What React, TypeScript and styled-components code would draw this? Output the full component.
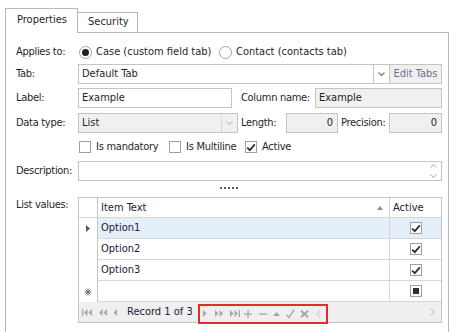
import styled, { createGlobalStyle } from 'styled-components'

const FONT = `"DejaVu Sans Condensed", "Noto Sans", "Liberation Sans", Arial, sans-serif`

const colors = {
  text: '#1f1f1f',
  cellText: '#20203a',
  border: '#b9b9b9',
  inputBorder: '#c4c4c4',
  rowLine: '#d6d6d6',
  disabledBg: '#f0f0f0',
  pagerBg: '#efefef',
  navIcon: '#a6a6a6',
  selected: '#e5effa',
  annotation: '#d9302c',
}

const GlobalStyle = createGlobalStyle`
  body {
    margin: 0;
    background: #fff;
    font-family: ${FONT};
    font-size: 11px;
    line-height: 14px;
    color: ${colors.text};
    overflow: hidden;
  }
`

const Page = styled.div`
  box-sizing: border-box;
  width: 454px;
  height: 332px;
  padding: 8px 0 0 5px;
  overflow: hidden;
`

const TabStrip = styled.div`
  display: flex;
  align-items: flex-end;
  height: 24px;
`

const TabHeader = styled.div<{ $active?: boolean; $w: number }>`
  position: relative;
  z-index: 1;
  box-sizing: border-box;
  width: ${({ $w }) => $w}px;
  height: ${({ $active }) => ($active ? 25 : 20)}px;
  margin-bottom: ${({ $active }) => ($active ? -1 : 0)}px;
  padding: ${({ $active }) => ($active ? '4px 0 0 11px' : '2px 0 0 10px')};
  border: 1px solid ${colors.border};
  border-bottom: none;
  border-left: ${({ $active }) => ($active ? `1px solid ${colors.border}` : 'none')};
  background: #fff;
  white-space: nowrap;
`

const Panel = styled.div`
  box-sizing: border-box;
  width: 444px;
  height: 320px;
  border: 1px solid ${colors.border};
  padding: 9px 6px 0 10px;
`

const Row = styled.div<{ $mt?: number; $h?: number; $top?: boolean }>`
  display: flex;
  align-items: ${({ $top }) => ($top ? 'flex-start' : 'center')};
  height: ${({ $h }) => $h ?? 20}px;
  margin-top: ${({ $mt }) => $mt ?? 0}px;
`

const FieldLabel = styled.div<{ $w?: number; $ml?: number; $pt?: number }>`
  flex-shrink: 0;
  width: ${({ $w }) => $w ?? 62}px;
  margin-left: ${({ $ml }) => $ml ?? 0}px;
  padding-top: ${({ $pt }) => $pt ?? 0}px;
  letter-spacing: -0.3px;
  white-space: nowrap;
`

const Box = styled.div<{ $w?: number; $disabled?: boolean; $right?: boolean }>`
  box-sizing: border-box;
  display: flex;
  align-items: center;
  height: 20px;
  ${({ $w }) => ($w ? `width: ${$w}px; flex-shrink: 0;` : 'flex: 1; min-width: 0;')}
  border: 1px solid ${colors.inputBorder};
  background: ${({ $disabled }) => ($disabled ? colors.disabledBg : '#fff')};
  text-align: ${({ $right }) => ($right ? 'right' : 'left')};
`

const BoxText = styled.span`
  flex: 1;
  padding: 0 4px 0 3px;
  white-space: nowrap;
`

const ArrowButton = styled.div<{ $faded?: boolean; $bordered?: boolean }>`
  align-self: stretch;
  width: 15px;
  display: flex;
  align-items: center;
  justify-content: center;
  border-left: ${({ $bordered, $faded }) =>
    $bordered ? `1px solid ${$faded ? '#d9d9d9' : colors.inputBorder}` : 'none'};
  color: ${({ $faded }) => ($faded ? '#c6c6c6' : '#7a7a7a')};
`

const SpinStack = styled.div`
  align-self: stretch;
  width: 15px;
  display: flex;
  flex-direction: column;
  align-items: center;
  justify-content: center;
  gap: 6px;
  color: #c6c6c6;
`

const EditButton = styled.div`
  box-sizing: border-box;
  flex-shrink: 0;
  width: 52px;
  height: 20px;
  display: flex;
  align-items: center;
  justify-content: center;
  border: 1px solid ${colors.inputBorder};
  border-left: none;
  background: ${colors.disabledBg};
  color: #6e7090;
`

const OptionItem = styled.label<{ $w?: number; $ml?: number; $tight?: boolean }>`
  display: flex;
  align-items: center;
  flex-shrink: 0;
  width: ${({ $w }) => ($w ? `${$w}px` : 'auto')};
  margin-left: ${({ $ml }) => $ml ?? 0}px;
  letter-spacing: ${({ $tight }) => ($tight ? '-0.25px' : 'normal')};
  white-space: nowrap;
`

const RadioCircle = styled.span<{ $checked?: boolean }>`
  box-sizing: border-box;
  width: 13px;
  height: 13px;
  margin-right: 4px;
  border: 1px solid #a3a3a3;
  border-radius: 50%;
  background: #fff;
  display: inline-flex;
  align-items: center;
  justify-content: center;

  &::after {
    content: '';
    display: ${({ $checked }) => ($checked ? 'block' : 'none')};
    width: 7px;
    height: 7px;
    border-radius: 50%;
    background: #1f1f1f;
  }
`

const CheckSquare = styled.span<{ $mr?: number }>`
  box-sizing: border-box;
  flex-shrink: 0;
  width: 12px;
  height: 12px;
  margin-right: ${({ $mr }) => $mr ?? 0}px;
  border: 1px solid #a0a0a0;
  background: #fff;
  display: inline-flex;
  align-items: center;
  justify-content: center;
  color: #303030;
`

const FilledMark = styled.span`
  width: 6px;
  height: 6px;
  background: #303030;
`

const Dots = styled.div`
  display: flex;
  gap: 2px;
  margin-left: 204px;

  span {
    width: 2px;
    height: 2px;
    background: #5a5a5a;
  }
`

const Grid = styled.div`
  box-sizing: border-box;
  flex: 1;
  border: 1px solid ${colors.inputBorder};
  color: ${colors.cellText};
`

const GridRow = styled.div<{ $header?: boolean }>`
  display: grid;
  grid-template-columns: 19px 292px 1fr;
  height: ${({ $header }) => ($header ? 20 : 21)}px;
`

const IndicatorCell = styled.div<{ $header?: boolean }>`
  box-sizing: border-box;
  display: flex;
  align-items: center;
  justify-content: center;
  border-right: 1px solid ${colors.inputBorder};
  border-bottom: ${({ $header }) => ($header ? `1px solid ${colors.rowLine}` : 'none')};
  color: #555;
`

const Cell = styled.div<{ $selected?: boolean; $center?: boolean; $last?: boolean }>`
  box-sizing: border-box;
  display: flex;
  align-items: center;
  justify-content: ${({ $center }) => ($center ? 'center' : 'space-between')};
  padding: ${({ $center }) => ($center ? '0' : '0 6px 0 3px')};
  border-bottom: 1px solid ${colors.rowLine};
  border-right: ${({ $last }) => ($last ? 'none' : `1px solid ${colors.rowLine}`)};
  background: ${({ $selected }) => ($selected ? colors.selected : 'transparent')};
  white-space: nowrap;
`

const HeaderCell = styled(Cell)`
  padding-left: 3px;
`

const Pager = styled.div`
  display: flex;
  align-items: center;
  height: 20px;
  background: ${colors.pagerBg};
  color: ${colors.navIcon};
`

const PagerSlot = styled.span<{ $ml: number }>`
  display: inline-flex;
  align-items: center;
  margin-left: ${({ $ml }) => $ml}px;
`

const RecordText = styled.span`
  margin-left: 10px;
  color: ${colors.cellText};
  white-space: nowrap;
`

const Highlight = styled.div`
  box-sizing: border-box;
  display: flex;
  align-items: center;
  width: 130px;
  height: 20px;
  margin-left: 5px;
  margin-top: 3px;
  border: 2px solid ${colors.annotation};
`

const Chevron = ({ up }: { up?: boolean }) => (
  <svg width="7" height="4" viewBox="0 0 7 4">
    <path
      d={up ? 'M0.5 3.5 L3.5 0.5 L6.5 3.5' : 'M0.5 0.5 L3.5 3.5 L6.5 0.5'}
      fill="none"
      stroke="currentColor"
      strokeWidth="1.2"
    />
  </svg>
)

const Tick = () => (
  <svg width="10" height="9" viewBox="0 0 10 9">
    <path d="M1.2 4.6 L3.8 7.2 L8.8 1.4" fill="none" stroke="currentColor" strokeWidth="1.8" />
  </svg>
)

type NavName =
  | 'first' | 'prevPage' | 'prev' | 'next' | 'nextPage' | 'last'
  | 'plus' | 'minus' | 'up' | 'check' | 'cancel' | 'left' | 'right'

function NavIcon({ name }: { name: NavName }) {
  switch (name) {
    case 'first':
      return (
        <svg width="10" height="7" viewBox="0 0 10 7" fill="currentColor">
          <rect x="0" y="0" width="1.3" height="7" />
          <polygon points="5.5,0 5.5,7 2,3.5" />
          <polygon points="10,0 10,7 6.5,3.5" />
        </svg>
      )
    case 'prevPage':
      return (
        <svg width="9" height="7" viewBox="0 0 9 7" fill="currentColor">
          <polygon points="4.5,0 4.5,7 1,3.5" />
          <polygon points="9,0 9,7 5.5,3.5" />
        </svg>
      )
    case 'prev':
      return (
        <svg width="4" height="7" viewBox="0 0 4 7" fill="currentColor">
          <polygon points="4,0 4,7 0.5,3.5" />
        </svg>
      )
    case 'next':
      return (
        <svg width="4" height="7" viewBox="0 0 4 7" fill="currentColor">
          <polygon points="0,0 0,7 3.5,3.5" />
        </svg>
      )
    case 'nextPage':
      return (
        <svg width="9" height="7" viewBox="0 0 9 7" fill="currentColor">
          <polygon points="0,0 0,7 3.5,3.5" />
          <polygon points="4.5,0 4.5,7 8,3.5" />
        </svg>
      )
    case 'last':
      return (
        <svg width="10" height="7" viewBox="0 0 10 7" fill="currentColor">
          <polygon points="0,0 0,7 3.5,3.5" />
          <polygon points="4.5,0 4.5,7 8,3.5" />
          <rect x="8.7" y="0" width="1.3" height="7" />
        </svg>
      )
    case 'plus':
      return (
        <svg width="8" height="8" viewBox="0 0 8 8" fill="currentColor">
          <rect x="0" y="3.4" width="8" height="1.3" />
          <rect x="3.4" y="0" width="1.3" height="8" />
        </svg>
      )
    case 'minus':
      return (
        <svg width="8" height="8" viewBox="0 0 8 8" fill="currentColor">
          <rect x="0" y="3.4" width="8" height="1.3" />
        </svg>
      )
    case 'up':
      return (
        <svg width="7" height="4" viewBox="0 0 7 4" fill="currentColor">
          <polygon points="0,4 7,4 3.5,0" />
        </svg>
      )
    case 'check':
      return (
        <svg width="9" height="10" viewBox="0 0 9 10">
          <path d="M0.8 5.8 L3 8.6 L8.2 0.6" fill="none" stroke="currentColor" strokeWidth="1.4" />
        </svg>
      )
    case 'cancel':
      return (
        <svg width="9" height="8" viewBox="0 0 9 8">
          <path d="M1 0.8 L8 7.2 M8 0.8 L1 7.2" fill="none" stroke="currentColor" strokeWidth="2" />
        </svg>
      )
    case 'left':
      return (
        <svg width="5" height="8" viewBox="0 0 5 8">
          <path d="M4.3 0.5 L1 4 L4.3 7.5" fill="none" stroke="#cfcfcf" strokeWidth="1.3" />
        </svg>
      )
    case 'right':
      return (
        <svg width="5" height="8" viewBox="0 0 5 8">
          <path d="M0.7 0.5 L4 4 L0.7 7.5" fill="none" stroke="#cfcfcf" strokeWidth="1.3" />
        </svg>
      )
  }
}

const RowArrow = () => (
  <svg width="4" height="7" viewBox="0 0 4 7" fill="currentColor">
    <polygon points="0,0 0,7 4,3.5" />
  </svg>
)

const NewRowMark = () => (
  <svg width="8" height="8" viewBox="0 0 8 8" stroke="#666" strokeWidth="1">
    <path d="M4 0.5 V7.5 M0.5 4 H7.5 M1.5 1.5 L6.5 6.5 M6.5 1.5 L1.5 6.5" />
  </svg>
)

const SortArrow = () => (
  <svg width="6" height="4" viewBox="0 0 6 4" fill="#8c8c8c">
    <polygon points="0,4 6,4 3,0" />
  </svg>
)

const listValues = [
  { text: 'Option1', active: true },
  { text: 'Option2', active: true },
  { text: 'Option3', active: true },
]

export default function App() {
  return (
    <Page>
      <GlobalStyle />
      <TabStrip>
        <TabHeader $active $w={73}>Properties</TabHeader>
        <TabHeader $w={60}>Security</TabHeader>
      </TabStrip>
      <Panel>
        <Row>
          <FieldLabel>Applies to:</FieldLabel>
          <OptionItem $w={140} $ml={1}>
            <RadioCircle $checked />
            Case (custom field tab)
          </OptionItem>
          <OptionItem>
            <RadioCircle />
            Contact (contacts tab)
          </OptionItem>
        </Row>

        <Row $mt={2}>
          <FieldLabel>Tab:</FieldLabel>
          <Box>
            <BoxText>Default Tab</BoxText>
            <ArrowButton $bordered>
              <Chevron />
            </ArrowButton>
          </Box>
          <EditButton>Edit Tabs</EditButton>
        </Row>

        <Row $mt={4}>
          <FieldLabel>Label:</FieldLabel>
          <Box $w={154}>
            <BoxText>Example</BoxText>
          </Box>
          <FieldLabel $w={74} $ml={9}>Column name:</FieldLabel>
          <Box $disabled>
            <BoxText>Example</BoxText>
          </Box>
        </Row>

        <Row $mt={5}>
          <FieldLabel>Data type:</FieldLabel>
          <Box $w={160} $disabled>
            <BoxText>List</BoxText>
            <ArrowButton $bordered $faded>
              <Chevron />
            </ArrowButton>
          </Box>
          <FieldLabel $w={45} $ml={3}>Length:</FieldLabel>
          <Box $w={52} $disabled $right>
            <BoxText>0</BoxText>
          </Box>
          <FieldLabel $w={48} $ml={3}>Precision:</FieldLabel>
          <Box $disabled $right>
            <BoxText>0</BoxText>
          </Box>
        </Row>

        <Row $mt={6} $h={16}>
          <FieldLabel />
          <OptionItem $w={90} $ml={1} $tight>
            <CheckSquare $mr={5} />
            Is mandatory
          </OptionItem>
          <OptionItem $w={76} $tight>
            <CheckSquare $mr={5} />
            Is Multiline
          </OptionItem>
          <OptionItem $tight>
            <CheckSquare $mr={5}>
              <Tick />
            </CheckSquare>
            Active
          </OptionItem>
        </Row>

        <Row $mt={6}>
          <FieldLabel>Description:</FieldLabel>
          <Box>
            <BoxText />
            <SpinStack>
              <Chevron up />
              <Chevron />
            </SpinStack>
          </Box>
        </Row>

        <Row $mt={3} $h={8}>
          <Dots>
            <span />
            <span />
            <span />
            <span />
            <span />
          </Dots>
        </Row>

        <Row $mt={5} $h={126} $top>
          <FieldLabel $pt={1}>List values:</FieldLabel>
          <Grid>
            <GridRow $header>
              <IndicatorCell $header />
              <HeaderCell>
                Item Text
                <SortArrow />
              </HeaderCell>
              <HeaderCell $last>Active</HeaderCell>
            </GridRow>
            {listValues.map((item, i) => (
              <GridRow key={item.text}>
                <IndicatorCell>{i === 0 && <RowArrow />}</IndicatorCell>
                <Cell $selected={i === 0}>{item.text}</Cell>
                <Cell $selected={i === 0} $center $last>
                  <CheckSquare>{item.active && <Tick />}</CheckSquare>
                </Cell>
              </GridRow>
            ))}
            <GridRow>
              <IndicatorCell>
                <NewRowMark />
              </IndicatorCell>
              <Cell />
              <Cell $center $last>
                <CheckSquare>
                  <FilledMark />
                </CheckSquare>
              </Cell>
            </GridRow>
            <Pager>
              <PagerSlot $ml={3}><NavIcon name="first" /></PagerSlot>
              <PagerSlot $ml={6}><NavIcon name="prevPage" /></PagerSlot>
              <PagerSlot $ml={6}><NavIcon name="prev" /></PagerSlot>
              <RecordText>Record 1 of 3</RecordText>
              <Highlight>
                <PagerSlot $ml={3}><NavIcon name="next" /></PagerSlot>
                <PagerSlot $ml={8}><NavIcon name="nextPage" /></PagerSlot>
                <PagerSlot $ml={6}><NavIcon name="last" /></PagerSlot>
                <PagerSlot $ml={4}><NavIcon name="plus" /></PagerSlot>
                <PagerSlot $ml={7}><NavIcon name="minus" /></PagerSlot>
                <PagerSlot $ml={6}><NavIcon name="up" /></PagerSlot>
                <PagerSlot $ml={6}><NavIcon name="check" /></PagerSlot>
                <PagerSlot $ml={5}><NavIcon name="cancel" /></PagerSlot>
                <PagerSlot $ml={7}><NavIcon name="left" /></PagerSlot>
              </Highlight>
              <PagerSlot $ml={102}><NavIcon name="right" /></PagerSlot>
            </Pager>
          </Grid>
        </Row>
      </Panel>
    </Page>
  )
}
